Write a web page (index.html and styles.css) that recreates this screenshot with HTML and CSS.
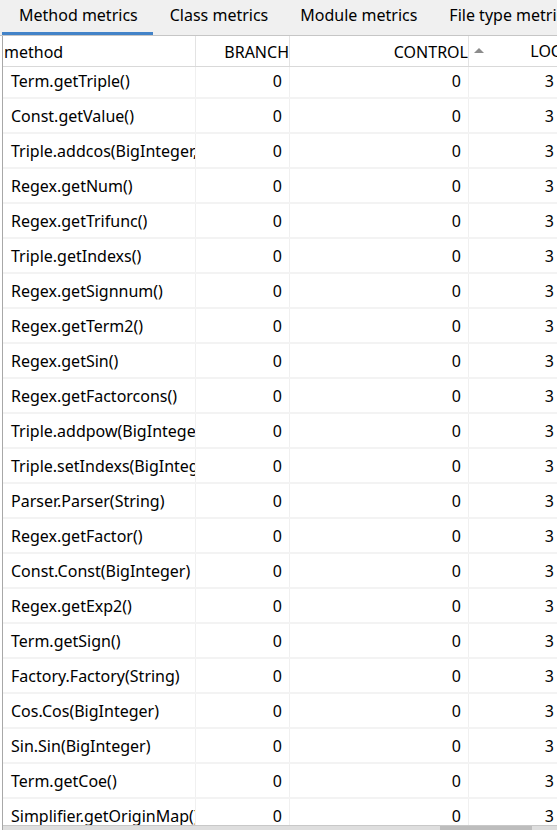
FILE: index.html
```html
<!DOCTYPE html>
<html lang="en">
<head>
    <meta charset="UTF-8">
    <title>Method metrics</title>
    <link rel="stylesheet" href="styles.css">
</head>
<body>
    <div class="tabs">
        <span class="tab active">Method metrics</span>
        <span class="tab">Class metrics</span>
        <span class="tab">Module metrics</span>
        <span class="tab">File type metrics</span>
    </div>
    <div class="table">
        <div class="row head">
            <span class="cell name">method</span>
            <span class="cell num">BRANCH</span>
            <span class="cell num">CONTROL</span>
            <span class="cell num sorted"><i class="arrow"></i>LOC</span>
        </div>
        <div class="body">
            <div class="rows">
                <div class="row"><span class="cell name">Term.getTriple()</span><span class="cell num">0</span><span class="cell num">0</span><span class="cell num">3</span></div>
                <div class="row"><span class="cell name">Const.getValue()</span><span class="cell num">0</span><span class="cell num">0</span><span class="cell num">3</span></div>
                <div class="row"><span class="cell name">Triple.addcos(BigInteger, BigInteger)</span><span class="cell num">0</span><span class="cell num">0</span><span class="cell num">3</span></div>
                <div class="row"><span class="cell name">Regex.getNum()</span><span class="cell num">0</span><span class="cell num">0</span><span class="cell num">3</span></div>
                <div class="row"><span class="cell name">Regex.getTrifunc()</span><span class="cell num">0</span><span class="cell num">0</span><span class="cell num">3</span></div>
                <div class="row"><span class="cell name">Triple.getIndexs()</span><span class="cell num">0</span><span class="cell num">0</span><span class="cell num">3</span></div>
                <div class="row"><span class="cell name">Regex.getSignnum()</span><span class="cell num">0</span><span class="cell num">0</span><span class="cell num">3</span></div>
                <div class="row"><span class="cell name">Regex.getTerm2()</span><span class="cell num">0</span><span class="cell num">0</span><span class="cell num">3</span></div>
                <div class="row"><span class="cell name">Regex.getSin()</span><span class="cell num">0</span><span class="cell num">0</span><span class="cell num">3</span></div>
                <div class="row"><span class="cell name">Regex.getFactorcons()</span><span class="cell num">0</span><span class="cell num">0</span><span class="cell num">3</span></div>
                <div class="row"><span class="cell name">Triple.addpow(BigInteger, BigInteger)</span><span class="cell num">0</span><span class="cell num">0</span><span class="cell num">3</span></div>
                <div class="row"><span class="cell name">Triple.setIndexs(BigInteger, BigInteger)</span><span class="cell num">0</span><span class="cell num">0</span><span class="cell num">3</span></div>
                <div class="row"><span class="cell name">Parser.Parser(String)</span><span class="cell num">0</span><span class="cell num">0</span><span class="cell num">3</span></div>
                <div class="row"><span class="cell name">Regex.getFactor()</span><span class="cell num">0</span><span class="cell num">0</span><span class="cell num">3</span></div>
                <div class="row"><span class="cell name">Const.Const(BigInteger)</span><span class="cell num">0</span><span class="cell num">0</span><span class="cell num">3</span></div>
                <div class="row"><span class="cell name">Regex.getExp2()</span><span class="cell num">0</span><span class="cell num">0</span><span class="cell num">3</span></div>
                <div class="row"><span class="cell name">Term.getSign()</span><span class="cell num">0</span><span class="cell num">0</span><span class="cell num">3</span></div>
                <div class="row"><span class="cell name">Factory.Factory(String)</span><span class="cell num">0</span><span class="cell num">0</span><span class="cell num">3</span></div>
                <div class="row"><span class="cell name">Cos.Cos(BigInteger)</span><span class="cell num">0</span><span class="cell num">0</span><span class="cell num">3</span></div>
                <div class="row"><span class="cell name">Sin.Sin(BigInteger)</span><span class="cell num">0</span><span class="cell num">0</span><span class="cell num">3</span></div>
                <div class="row"><span class="cell name">Term.getCoe()</span><span class="cell num">0</span><span class="cell num">0</span><span class="cell num">3</span></div>
                <div class="row"><span class="cell name">Simplifier.getOriginMap()</span><span class="cell num">0</span><span class="cell num">0</span><span class="cell num">3</span></div>
            </div>
        </div>
        <div class="hscroll"><span class="thumb"></span></div>
    </div>
</body>
</html>
```

FILE: styles.css
```css
html, body {
    margin: 0;
    height: 100%;
    overflow: hidden;
}

body {
    display: flex;
    flex-direction: column;
    background-color: #fff;
    color: #000;
    font-family: "Noto Sans", "Open Sans", sans-serif;
    font-size: 16px;
}

.tabs {
    display: flex;
    height: 35px;
    padding-left: 2px;
    background-color: #f0f0f0;
    border-bottom: 1px solid #c6c6c6;
    white-space: nowrap;
    overflow: hidden;
}

.tab {
    box-sizing: border-box;
    height: 35px;
    line-height: 31px;
    padding: 0 15px 0 17px;
    border-bottom: 3px solid transparent;
}

.tab.active {
    border-bottom-color: #4383c8;
}

.table {
    flex: 1;
    display: flex;
    flex-direction: column;
    margin-left: 2px;
    border-left: 1px solid #a8a8a8;
    min-height: 0;
    overflow: hidden;
}

.row {
    display: grid;
    grid-template-columns: 193px 94px 179px 97px;
    box-sizing: border-box;
    height: 35px;
    border-bottom: 2px solid #f3f3f3;
}

.cell {
    overflow: hidden;
    white-space: nowrap;
    padding-top: 2px;
    line-height: 31px;
    border-right: 1px solid #f0f0f0;
}

.cell.name {
    padding-left: 8px;
}

.cell.num {
    text-align: right;
    padding-right: 7px;
}

.rows .cell:last-child {
    padding-right: 11px;
}

.row.head {
    height: 31px;
    border-bottom: 1px solid #d9d9d9;
}

.head .cell {
    line-height: 28px;
    border-right-color: #e3e3e3;
}

.head .cell.name {
    padding-left: 1px;
}

.head .cell.num {
    padding-right: 0;
}

.head .cell.sorted {
    display: flex;
    justify-content: space-between;
    align-items: center;
    padding-top: 0;
    padding-right: 4px;
    line-height: 32px;
}

.arrow {
    width: 0;
    height: 0;
    margin-left: 5px;
    margin-top: -2px;
    border-left: 5px solid transparent;
    border-right: 5px solid transparent;
    border-bottom: 5px solid #8c8c8c;
}

.body {
    flex: 1;
    overflow: hidden;
}

.rows {
    margin-top: -3px;
}

.hscroll {
    position: relative;
    height: 4px;
    background-color: #dedede;
    border-top: 1px solid #c8c8c8;
}

.thumb {
    position: absolute;
    left: 437px;
    top: 0;
    width: 92px;
    height: 4px;
    background-color: #bdbdbd;
}
```
